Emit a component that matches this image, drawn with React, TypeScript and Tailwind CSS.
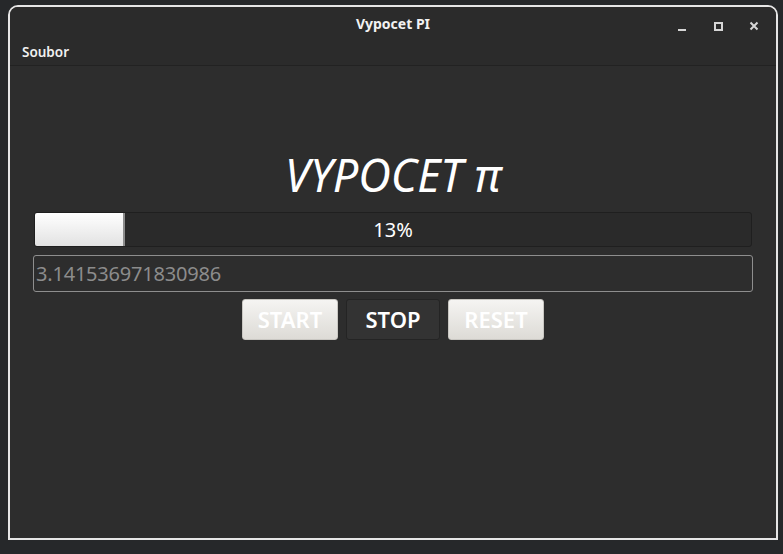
import React from 'react';

const font = { fontFamily: '"Noto Sans", "Open Sans", sans-serif' };

function TitleButtons() {
  return (
    <div className="absolute right-[16px] top-[13px] flex items-center gap-[24px] text-[#d6d6d6]">
      <svg width="12" height="12" viewBox="0 0 12 12">
        <rect x="2" y="9" width="8" height="2" fill="currentColor" />
      </svg>
      <svg width="12" height="12" viewBox="0 0 12 12">
        <rect x="3" y="3" width="7" height="7" fill="none" stroke="currentColor" strokeWidth="2" />
      </svg>
      <svg width="12" height="12" viewBox="0 0 12 12">
        <path d="M2.5 2.5 L9.5 9.5 M9.5 2.5 L2.5 9.5" stroke="currentColor" strokeWidth="2" />
      </svg>
    </div>
  );
}

export default function App() {
  const progress = 13;
  return (
    <div className="w-[783px] h-[554px] bg-[#26282a] pt-[5px] pl-[8px] overflow-hidden" style={font}>
      <div className="w-[770px] h-[535px] border-2 border-[#e6e6e6] rounded-t-[10px] bg-[#2d2d2d] flex flex-col overflow-hidden">
        <div className="relative h-[34px] bg-[#2b2b2b] flex items-center justify-center">
          <span className="text-[14px] font-bold text-[#f2f2f2] leading-none">Vypocet PI</span>
          <TitleButtons />
        </div>
        <div className="h-[25px] bg-[#2b2b2b] border-b border-[#222222] flex items-center pl-[12px]">
          <span className="text-[13.5px] font-semibold text-[#f0f0f0] leading-none">Soubor</span>
        </div>

        <div className="flex flex-col pt-[83px] px-[23px]">
          <h1 className="text-center text-[45px] leading-[52px] italic font-normal text-white">VYPOCET π</h1>

          <div className="mt-[11px] mx-px h-[35px] rounded-[3px] border border-[#1f1f1f] bg-[#2a2a2a] relative flex items-center justify-center overflow-hidden">
            <div
              className="absolute left-0 top-0 bottom-0 bg-gradient-to-b from-[#ffffff] to-[#e2e2e2] border-r-2 border-[#8c8c8c]"
              style={{ width: `${progress * 0.97}%` }}
            />
            <span className="relative text-[20px] text-white leading-none">{progress}%</span>
          </div>

          <div className="mt-[8px] h-[37px] rounded-[3px] border border-[#8e8e8e] flex items-center pl-[2px]">
            <span className="text-[20px] text-[#8c8c8c] leading-none tracking-[-0.2px]">3.141536971830986</span>
          </div>

          <div className="mt-[7px] flex justify-center gap-[8px]">
            <button className="w-[96px] h-[41px] rounded-[3px] border border-[#c9c7c2] bg-gradient-to-b from-[#f5f4f2] to-[#dddbd6] text-[22px] font-semibold text-white">
              START
            </button>
            <button className="w-[94px] h-[41px] rounded-[3px] border border-[#242424] bg-[#333333] text-[22px] font-semibold text-white">
              STOP
            </button>
            <button className="w-[96px] h-[41px] rounded-[3px] border border-[#c9c7c2] bg-gradient-to-b from-[#f5f4f2] to-[#dddbd6] text-[22px] font-semibold text-white">
              RESET
            </button>
          </div>
        </div>
      </div>
    </div>
  );
}
